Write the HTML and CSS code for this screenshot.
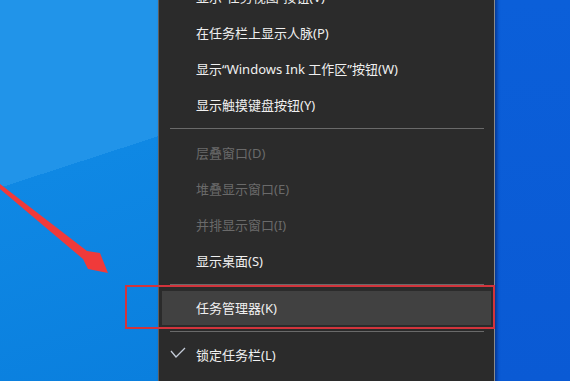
FILE: index.html
```html
<!DOCTYPE html>
<html lang="zh-CN">
<head>
  <meta charset="UTF-8" />
  <title>任务栏右键菜单</title>
  <link rel="stylesheet" href="styles.css">
</head>
<body>
  <div class="desk">
    <div class="desk-left">
      <svg class="arrow" width="120" height="300" viewBox="0 0 120 300">
        <polygon points="0,184 87,251 100,253 108,273 88,269 83,259 0,189" fill="#f03a3a"/>
      </svg>
    </div>
    <div class="menu">
      <div class="item">
        <svg class="tick" width="16" height="12" viewBox="0 0 16 12"><polyline points="1,4 6,10 15,1" fill="none" stroke="#c4ccd8" stroke-width="1.3"/></svg>
        显示“任务视图”按钮(V)
      </div>
      <div class="item">在任务栏上显示人脉(P)</div>
      <div class="item">显示“Windows Ink 工作区”按钮(W)</div>
      <div class="item">显示触摸键盘按钮(Y)</div>
      <div class="sep first"></div>
      <div class="item off">层叠窗口(D)</div>
      <div class="item off">堆叠显示窗口(E)</div>
      <div class="item off">并排显示窗口(I)</div>
      <div class="item">显示桌面(S)</div>
      <div class="sep"></div>
      <div class="item hover">任务管理器(K)<span class="mark"></span></div>
      <div class="sep"></div>
      <div class="item">
        <svg class="tick" width="16" height="12" viewBox="0 0 16 12"><polyline points="1,4 6,10 15,1" fill="none" stroke="#c4ccd8" stroke-width="1.3"/></svg>
        锁定任务栏(L)
      </div>
    </div>
    <div class="desk-right"></div>
  </div>
</body>
</html>
```

FILE: styles.css
```css
html, body {
  margin: 0;
  height: 100%;
  overflow: hidden;
}
body {
  font-family: "Noto Sans", "Noto Sans CJK SC", sans-serif;
  font-size: 13px;
}
.desk {
  display: flex;
  height: 381px;
}
.desk-left {
  width: 158px;
  position: relative;
  background: linear-gradient(162deg, #2194e9 0 43.4%, #0f88e4 43.4%, #0a7fde 100%);
}
.arrow {
  position: absolute;
  left: 0;
  top: 0;
}
.desk-right {
  flex: 1;
  background: linear-gradient(180deg, #0b5fd9, #0a5ad4);
}
.menu {
  display: flex;
  flex-direction: column;
  width: 335px;
  margin-top: -21px;
  height: 420px;
  background-color: #2b2b2b;
  border-left: 1px solid #5e5e5e;
  border-right: 1px solid #8a8a8a;
  box-shadow: 2px 0 3px rgba(0, 20, 80, 0.5);
  position: relative;
  z-index: 1;
}
.item {
  position: relative;
  flex: none;
  height: 34px;
  line-height: 34px;
  margin: 1px 3px;
  padding-left: 34px;
  color: #f0f0f0;
  white-space: nowrap;
}
.off {
  color: #6a6a6a;
}
.hover {
  background-color: #414141;
}
.tick {
  position: absolute;
  left: 8px;
  top: 9px;
}
.sep {
  flex: none;
  height: 1px;
  margin: 5px 10px 5px 11px;
  background-color: #6a6a6a;
}
.sep.first {
  margin-bottom: 6px;
}
.mark {
  position: absolute;
  left: -37px;
  right: -4px;
  top: -6px;
  bottom: -4px;
  border: 2px solid #d2343c;
}
```
